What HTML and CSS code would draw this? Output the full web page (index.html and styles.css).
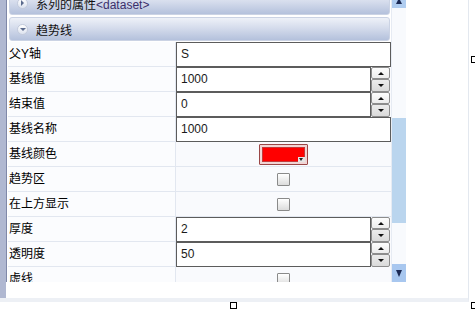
FILE: index.html
```html
<!doctype html>
<html lang="zh">
<head>
  <meta charset="UTF-8" />
  <title>趋势线属性</title>
  <link rel="stylesheet" href="styles.css">
</head>
<body>
  <div class="form">
    <div class="frame">
      <div class="panel">
        <div class="grid">
          <div class="group first">
            <span class="toggle"><i class="tri-right"></i></span>
            <span class="group-title">系列的属性<span class="tag">&lt;dataset&gt;</span></span>
          </div>
          <div class="group open">
            <span class="toggle"><i class="tri-down"></i></span>
            <span class="group-title">趋势线</span>
          </div>

          <div class="row">
            <div class="label">父Y轴</div>
            <div class="value edit"><div class="textbox">S</div></div>
          </div>
          <div class="row">
            <div class="label">基线值</div>
            <div class="value edit">
              <div class="textbox short">1000</div>
              <div class="spin"><span class="up"><i></i></span><span class="down"><i></i></span></div>
            </div>
          </div>
          <div class="row">
            <div class="label">结束值</div>
            <div class="value edit">
              <div class="textbox short">0</div>
              <div class="spin"><span class="up"><i></i></span><span class="down"><i></i></span></div>
            </div>
          </div>
          <div class="row">
            <div class="label">基线名称</div>
            <div class="value edit"><div class="textbox">1000</div></div>
          </div>
          <div class="row">
            <div class="label">基线颜色</div>
            <div class="value">
              <div class="color-pick"><span class="swatch"></span><i class="drop"></i></div>
            </div>
          </div>
          <div class="row">
            <div class="label">趋势区</div>
            <div class="value"><span class="check"></span></div>
          </div>
          <div class="row">
            <div class="label">在上方显示</div>
            <div class="value"><span class="check"></span></div>
          </div>
          <div class="row">
            <div class="label">厚度</div>
            <div class="value edit">
              <div class="textbox short">2</div>
              <div class="spin"><span class="up"><i></i></span><span class="down"><i></i></span></div>
            </div>
          </div>
          <div class="row">
            <div class="label">透明度</div>
            <div class="value edit">
              <div class="textbox short">50</div>
              <div class="spin"><span class="up"><i></i></span><span class="down"><i></i></span></div>
            </div>
          </div>
          <div class="row">
            <div class="label">虚线</div>
            <div class="value"><span class="check"></span></div>
          </div>
        </div>

        <div class="scrollbar">
          <div class="sb-btn sb-up"><i></i></div>
          <div class="sb-track"><div class="sb-thumb"></div></div>
          <div class="sb-btn sb-down"><i></i></div>
        </div>
      </div>
    </div>
  </div>

  <!-- poignées de sélection du designer -->
  <span class="handle h-right"></span>
  <span class="handle h-bottom"></span>
  <span class="handle h-corner"></span>
</body>
</html>
```

FILE: styles.css
```css
* {
  margin: 0;
  padding: 0;
  box-sizing: border-box;
}

body {
  position: relative;
  width: 475px;
  height: 313px;
  overflow: hidden;
  background: #fff;
  font-family: "Liberation Sans", "Noto Sans CJK SC", sans-serif;
  font-size: 12px;
  color: #000;
}

.form {
  width: 469px;
  height: 302px;
  border-right: 1px solid #e3e8ef;
  border-bottom: 4px solid #edf0f5;
}

.frame {
  width: 406px;
  height: 298px;
  border-left: 6px solid #b0b8d1;
}

.panel {
  display: flex;
  height: 282px;
  overflow: hidden;
  border-left: 1px solid #7f88a8;
  padding-left: 1px;
}

.grid {
  width: 383px;
}

/* en-têtes de groupe */
.group {
  display: flex;
  align-items: center;
  height: 24px;
  margin: 0 1px;
  padding-left: 7px;
  border: 1px solid #cbd3e4;
  border-radius: 3px;
  background: linear-gradient(#eef1f8, #d5dcec 45%, #b4c1dc);
}

.group.first {
  margin-top: -9px;
  margin-bottom: 2px;
}

.group.open {
  margin-bottom: 1px;
}

.toggle {
  display: flex;
  justify-content: center;
  align-items: center;
  width: 11px;
  height: 11px;
  margin-right: 8px;
  border-radius: 50%;
  border: 1px solid #c3cbdc;
  background: linear-gradient(#ffffff, #dde3ef);
}

.tri-right {
  border-left: 3px solid #5b6b8d;
  border-top: 3px solid transparent;
  border-bottom: 3px solid transparent;
}

.tri-down {
  border-top: 3px solid #5b6b8d;
  border-left: 3px solid transparent;
  border-right: 3px solid transparent;
}

.group-title {
  color: #111;
}

.tag {
  color: #3b2f6b;
}

/* lignes de propriétés */
.row {
  display: flex;
  height: 25px;
}

.label {
  width: 168px;
  padding-left: 1px;
  line-height: 24px;
  background: #fbfcfe;
  border-right: 1px solid #e2e7f0;
  border-bottom: 1px solid #e2e7f0;
  white-space: nowrap;
}

.value {
  flex: 1;
  display: flex;
  justify-content: center;
  align-items: center;
  background: #f9fafd;
  border-bottom: 1px solid #e2e7f0;
}

.value.edit {
  justify-content: flex-start;
  align-items: stretch;
  border-bottom: none;
}

.textbox {
  width: 100%;
  padding-left: 4px;
  line-height: 23px;
  background: #fff;
  border: 1px solid #5c5c5c;
  color: #1a1a1a;
}

.textbox.short {
  width: 195px;
}

.spin {
  display: flex;
  flex-direction: column;
  width: 19px;
}

.spin span {
  display: flex;
  justify-content: center;
  align-items: center;
  border: 1px solid #8d8d8d;
  border-radius: 2px;
}

.spin .up {
  height: 12px;
  background: linear-gradient(#fdfdfd, #ececec);
}

.spin .down {
  height: 13px;
  background: linear-gradient(#ececec, #dadada);
}

.spin .up i {
  border-bottom: 3px solid #111;
  border-left: 3px solid transparent;
  border-right: 3px solid transparent;
}

.spin .down i {
  border-top: 3px solid #111;
  border-left: 3px solid transparent;
  border-right: 3px solid transparent;
}

.color-pick {
  display: flex;
  width: 49px;
  height: 21px;
  padding: 2px;
  border: 1px solid #9a4646;
  background: #f1d4d4;
  border-radius: 1px;
  position: relative;
}

.swatch {
  flex: 1;
  background: #ff0000;
  border: 1px solid #c23a3a;
}

.color-pick .drop {
  position: absolute;
  right: 2px;
  bottom: 2px;
  width: 7px;
  height: 5px;
  background: #e4e4e4;
}

.color-pick .drop::after {
  content: "";
  display: block;
  margin: 1px 0 0 1px;
  border-top: 3px solid #222;
  border-left: 2.5px solid transparent;
  border-right: 2.5px solid transparent;
  width: 0;
}

.check {
  width: 13px;
  height: 13px;
  border: 1px solid #8a8a8a;
  border-radius: 1px;
  background: linear-gradient(#ffffff, #dcdcdc);
}

/* barre de défilement */
.scrollbar {
  display: flex;
  flex-direction: column;
  width: 15px;
  background: #f8fafd;
  border-left: 1px solid #e6ebf3;
}

.sb-btn {
  display: flex;
  justify-content: center;
  align-items: center;
}

.sb-up {
  height: 16px;
  margin-top: -8px;
  background: #b0cdf0;
}

.sb-up i {
  margin-top: 2px;
  border-bottom: 6px solid #1c2a54;
  border-left: 3.5px solid transparent;
  border-right: 3.5px solid transparent;
}

.sb-track {
  flex: 1;
  padding-top: 110px;
}

.sb-thumb {
  height: 105px;
  background: #bad5ee;
}

.sb-down {
  height: 18px;
  background: #a8c7ef;
}

.sb-down i {
  border-top: 7px solid #1c2a54;
  border-left: 3.5px solid transparent;
  border-right: 3.5px solid transparent;
}

/* poignées */
.handle {
  position: absolute;
  width: 7px;
  height: 7px;
  background: #fff;
  border: 1px solid #000;
}

.h-right {
  left: 471px;
  top: 56px;
}

.h-bottom {
  left: 230px;
  top: 302px;
}

.h-corner {
  left: 471px;
  top: 302px;
}
```
